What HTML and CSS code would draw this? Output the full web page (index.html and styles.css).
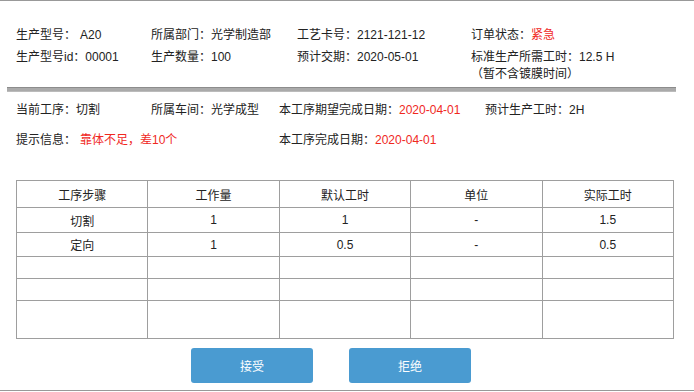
FILE: index.html
```html
<!DOCTYPE html>
<html lang="zh-CN">
<head>
    <meta charset="UTF-8">
    <meta name="viewport" content="width=device-width, initial-scale=1.0">
    <title>工序确认</title>
    <link rel="stylesheet" href="styles.css">
</head>
<body>
    <div class="page">
        <div class="order-info">
            <div class="item">生产型号：<span class="gap">A20</span></div>
            <div class="item">所属部门：光学制造部</div>
            <div class="item">工艺卡号：2121-121-12</div>
            <div class="item">订单状态：<span class="red">紧急</span></div>
            <div class="item">生产型号id：00001</div>
            <div class="item">生产数量：100</div>
            <div class="item">预计交期：2020-05-01</div>
            <div class="item">标准生产所需工时：12.5 H<br><span class="note">（暂不含镀膜时间）</span></div>
        </div>

        <div class="divider"></div>

        <div class="process-info">
            <div class="item">当前工序：切割</div>
            <div class="item">所属车间：光学成型</div>
            <div class="item">本工序期望完成日期：<span class="red">2020-04-01</span></div>
            <div class="item">预计生产工时：2H</div>
            <div class="item wide">提示信息：<span class="red gap">靠体不足，差10个</span></div>
            <div class="item">本工序完成日期：<span class="red">2020-04-01</span></div>
        </div>

        <table class="steps">
            <thead>
                <tr>
                    <th>工序步骤</th>
                    <th>工作量</th>
                    <th>默认工时</th>
                    <th>单位</th>
                    <th>实际工时</th>
                </tr>
            </thead>
            <tbody>
                <tr class="r1">
                    <td>切割</td><td>1</td><td>1</td><td>-</td><td>1.5</td>
                </tr>
                <tr class="r2">
                    <td>定向</td><td>1</td><td>0.5</td><td>-</td><td>0.5</td>
                </tr>
                <tr class="r3">
                    <td></td><td></td><td></td><td></td><td></td>
                </tr>
                <tr class="r3">
                    <td></td><td></td><td></td><td></td><td></td>
                </tr>
                <tr class="r5">
                    <td></td><td></td><td></td><td></td><td></td>
                </tr>
            </tbody>
        </table>

        <div class="actions">
            <button class="btn">接受</button>
            <button class="btn">拒绝</button>
        </div>
    </div>
</body>
</html>
```

FILE: styles.css
```css
* {
    box-sizing: border-box;
}

body {
    margin: 0;
    padding: 0;
    background-color: #fff;
    color: #222;
    font-family: "Liberation Sans", "Noto Sans CJK SC", sans-serif;
    font-size: 12px;
}

.page {
    height: 391px;
    border-top: 1px solid #999;
    border-bottom: 1px solid #999;
}

.order-info {
    display: grid;
    grid-template-columns: 135px 146px 174px auto;
    row-gap: 5px;
    padding: 26px 0 0 16px;
    line-height: 17px;
}

.gap {
    margin-left: 4px;
}

.red {
    color: #f0281e;
}

.divider {
    margin: 4px 18px 0 7px;
    height: 5px;
    background-color: #aaa;
    border-top: 1px solid #8c8c8c;
    border-bottom: 1px solid #bbb;
}

.process-info {
    display: grid;
    grid-template-columns: 135px 128px 206px auto;
    row-gap: 13px;
    padding: 10px 0 0 16px;
    line-height: 17px;
}

.process-info .wide {
    grid-column: span 2;
}

.steps {
    margin: 31px 0 0 16px;
    width: 658px;
    border-collapse: collapse;
    table-layout: fixed;
}

.steps th,
.steps td {
    border: 1px solid #9e9e9e;
    text-align: center;
    vertical-align: middle;
    font-weight: normal;
    padding: 0;
}

.steps th {
    height: 27px;
}

.steps .r1 td {
    height: 25px;
}

.steps .r2 td {
    height: 24px;
}

.steps .r3 td {
    height: 22px;
}

.steps .r5 td {
    height: 38px;
}

.actions {
    display: flex;
    gap: 36px;
    padding: 9px 0 0 191px;
}

.btn {
    width: 122px;
    height: 35px;
    border: none;
    border-radius: 3px;
    background-color: #4a9bd1;
    color: #fff;
    font-family: "Liberation Sans", "Noto Sans CJK SC", sans-serif;
    font-size: 12px;
}
```
